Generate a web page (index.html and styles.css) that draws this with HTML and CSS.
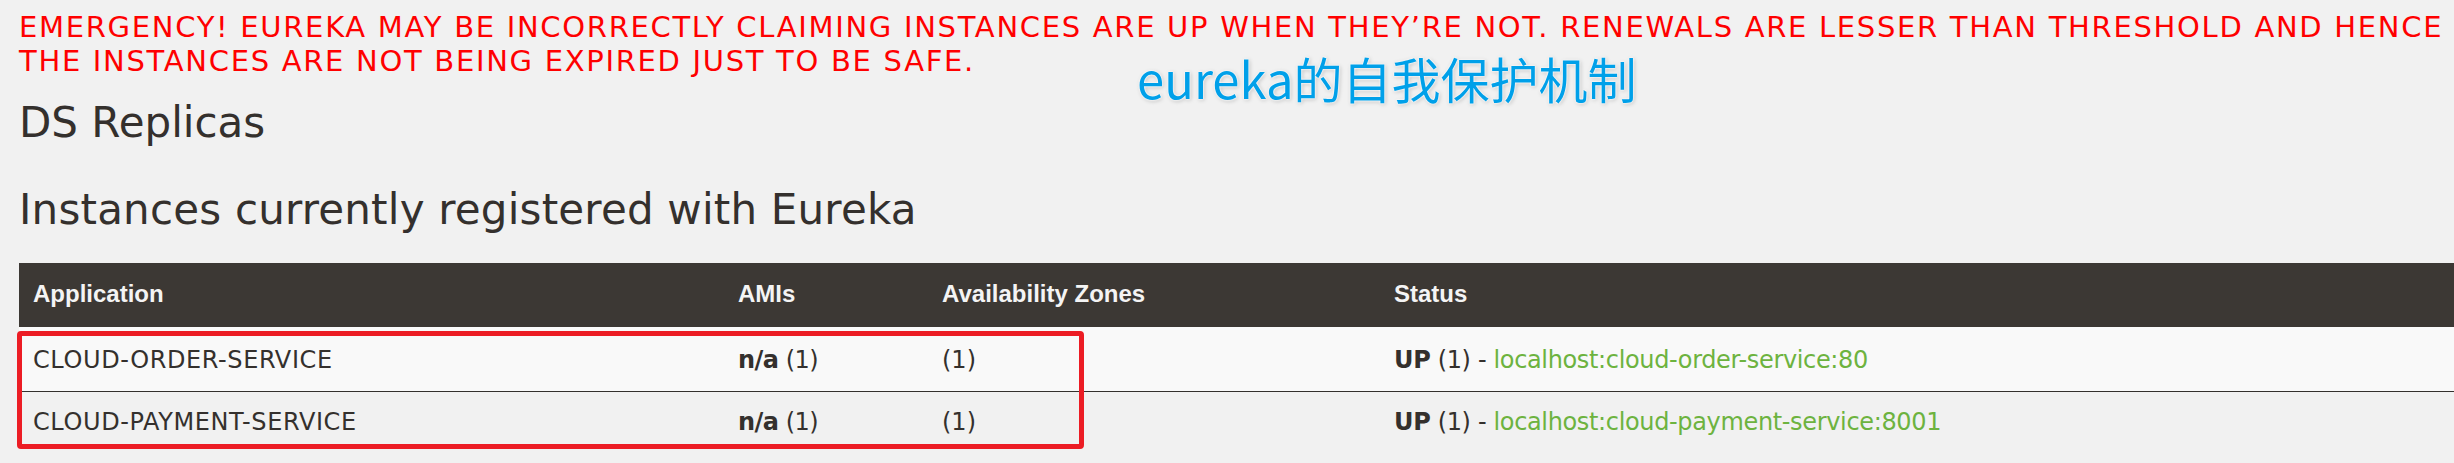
FILE: index.html
```html
<!DOCTYPE html>
<html lang="en">
<head>
<meta charset="utf-8">
<title>Eureka</title>
<link rel="stylesheet" href="styles.css">
</head>
<body>
<div class="page">
  <h4 class="emergency">EMERGENCY! EUREKA MAY BE INCORRECTLY CLAIMING INSTANCES ARE UP WHEN THEY’RE NOT. RENEWALS ARE LESSER THAN THRESHOLD AND HENCE THE INSTANCES ARE NOT BEING EXPIRED JUST TO BE SAFE.</h4>
  <h2 class="title title-replicas">DS Replicas</h2>
  <h2 class="title title-instances">Instances currently registered with Eureka</h2>
  <table class="instances">
    <colgroup>
      <col class="col-app">
      <col class="col-ami">
      <col class="col-zone">
      <col>
    </colgroup>
    <thead>
      <tr>
        <th>Application</th>
        <th>AMIs</th>
        <th>Availability Zones</th>
        <th>Status</th>
      </tr>
    </thead>
    <tbody>
      <tr class="row-odd">
        <td class="cell-app">CLOUD-ORDER-SERVICE</td>
        <td class="cell-ami"><b>n/a</b> (1)</td>
        <td>(1)</td>
        <td class="cell-status"><b>UP</b> (1) - <a href="#">localhost:cloud-order-service:80</a></td>
      </tr>
      <tr class="row-even">
        <td class="cell-app">CLOUD-PAYMENT-SERVICE</td>
        <td class="cell-ami"><b>n/a</b> (1)</td>
        <td>(1)</td>
        <td class="cell-status"><b>UP</b> (1) - <a href="#">localhost:cloud-payment-service:8001</a></td>
      </tr>
    </tbody>
  </table>
</div>
<div class="note">eureka的自我保护机制</div>
<div class="highlight"></div>
</body>
</html>
```
FILE: styles.css
```css
html, body {
  margin: 0;
  padding: 0;
}

body {
  background: #f1f1f1;
  color: #34302d;
  font-family: "DejaVu Sans", "Noto Sans", sans-serif;
  position: relative;
  overflow: hidden;
}

.page {
  padding: 10px 0 0 19px;
}

.emergency {
  margin: 0;
  color: #ff0000;
  font-family: "DejaVu Sans", sans-serif;
  font-weight: normal;
  font-size: 29px;
  line-height: 34px;
  letter-spacing: 1.7px;
}

.title {
  margin: 0;
  font-family: "DejaVu Sans", sans-serif;
  font-weight: normal;
  font-size: 42px;
  line-height: 49px;
  color: #34302d;
}

.title-replicas {
  margin-top: 20px;
}

.title-instances {
  margin-top: 38px;
  letter-spacing: 0.2px;
}

.instances {
  margin-top: 29px;
  width: 100%;
  border-collapse: collapse;
  table-layout: fixed;
}

.col-app { width: 705px; }
.col-ami { width: 204px; }
.col-zone { width: 452px; }

.instances th {
  background: #3c3834;
  color: #f4f4f4;
  font-family: "Liberation Sans", Arial, sans-serif;
  font-weight: bold;
  font-size: 24px;
  line-height: 28px;
  text-align: left;
  padding: 17px 14px 19px;
  border-bottom: 3px solid #fbfbfb;
}

.instances td {
  font-size: 24px;
  line-height: 30px;
  padding: 15px 14px 16px;
  color: #34302d;
  white-space: nowrap;
}

.instances td b {
  font-weight: bold;
}

.cell-app {
  letter-spacing: 0.6px;
}

.cell-ami {
  letter-spacing: -0.5px;
}

.cell-status {
  letter-spacing: -0.35px;
}

.row-odd td {
  background: #f9f9f9;
}

.row-even td {
  background: #f1f1f1;
  border-top: 1px solid #34302d;
}

.instances a {
  color: #6db33f;
  text-decoration: none;
}

.note {
  position: absolute;
  left: 1137px;
  top: 53px;
  font-family: "Noto Sans CJK SC", "Noto Sans", sans-serif;
  font-size: 49px;
  line-height: 49px;
  color: #00a0e9;
  text-shadow: 0 0 1px #fff, 0 0 2px #fff, 0 0 3px #fff, 1px 1px 4px rgba(0, 0, 0, 0.25);
}

.highlight {
  position: absolute;
  left: 17px;
  top: 331px;
  width: 1057px;
  height: 108px;
  border: 5px solid #ec1c24;
  border-radius: 4px;
}
```
